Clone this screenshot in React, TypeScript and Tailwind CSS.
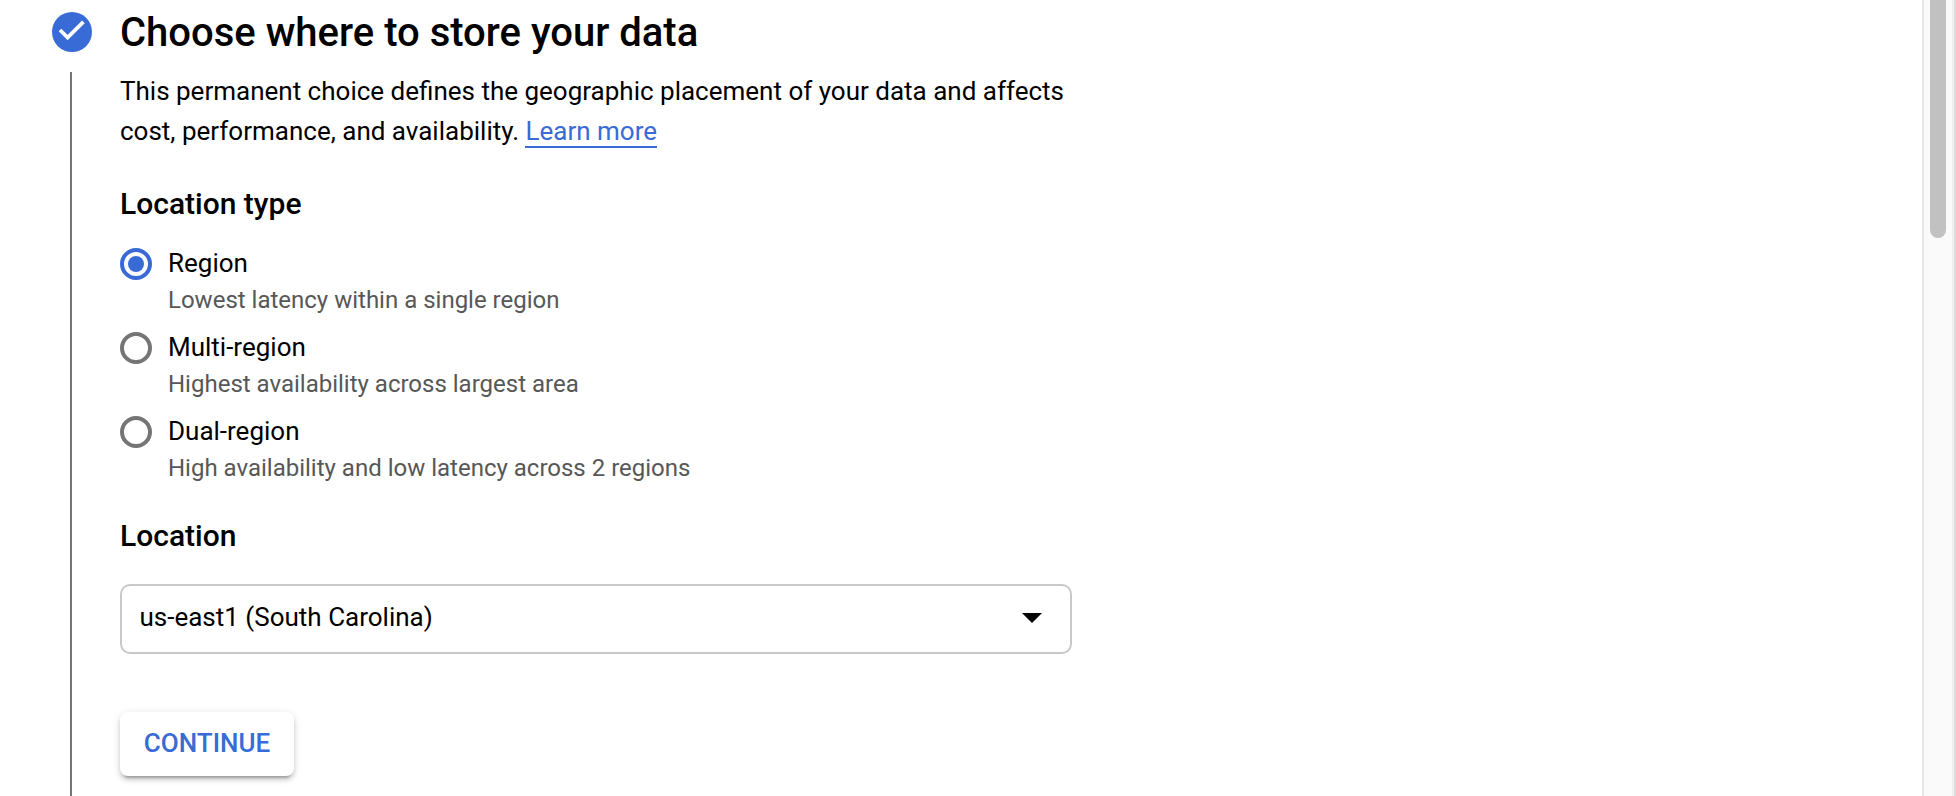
import React from "react";

type Option = { label: string; description: string };

const options: Option[] = [
  { label: "Region", description: "Lowest latency within a single region" },
  { label: "Multi-region", description: "Highest availability across largest area" },
  { label: "Dual-region", description: "High availability and low latency across 2 regions" },
];

export default function App() {
  const [selected, setSelected] = React.useState("Region");
  return (
    <div className="flex h-[796px] w-[1956px] overflow-hidden bg-white font-[Roboto,sans-serif] text-black">
      <div className="ml-[52px] flex w-[40px] shrink-0 flex-col">
        <svg className="mt-[12px] size-[40px] shrink-0" viewBox="0 0 40 40">
          <circle cx="20" cy="20" r="20" fill="#396bd6" />
          <path d="M8 18l7.6 7.6L31.4 9.8" fill="none" stroke="#fff" strokeWidth="3.8" />
        </svg>
        <div className="mt-[20px] ml-[18px] w-[2px] flex-1 bg-[#757575]" />
      </div>
      <main className="ml-[28px] w-[952px] shrink-0">
        <h1 className="mt-[9px] h-[48px] text-[40px] leading-[48px] font-medium whitespace-nowrap">Choose where to store your data</h1>
        <p className="mt-[14px] text-[26px] leading-[40px] whitespace-nowrap">
          This permanent choice defines the geographic placement of your data and affects
          <br />
          cost, performance, and availability.{" "}
          <a href="#" className="border-b-2 border-[#396bd6] text-[#396bd6]">Learn more</a>
        </p>
        <h2 className="mt-[33px] text-[30px] leading-[40px] font-medium">Location type</h2>
        <div className="mt-[20px] flex flex-col">
          {options.map((option) => (
            <button key={option.label} onClick={() => setSelected(option.label)} className="flex h-[84px] text-left">
              <svg className="mt-[4px] size-[32px] shrink-0" viewBox="0 0 32 32">
                <circle cx="16" cy="16" r="14" fill="none" strokeWidth="4" stroke={selected === option.label ? "#396bd6" : "#757575"} />
                {selected === option.label && <circle cx="16" cy="16" r="8" fill="#396bd6" />}
              </svg>
              <span className="ml-[16px] flex flex-col whitespace-nowrap">
                <span className="text-[26px] leading-[38px]">{option.label}</span>
                <span className="text-[24px] leading-[36px] text-[#575757]">{option.description}</span>
              </span>
            </button>
          ))}
        </div>
        <h2 className="mt-[20px] text-[30px] leading-[40px] font-medium">Location</h2>
        <button className="mt-[28px] flex h-[70px] w-[952px] items-center justify-between rounded-[10px] border-2 border-[#c9c9c9] pr-[28px] pb-[2px] pl-[17.5px] text-[26px]">
          <span className="pb-[2px]">us-east1 (South Carolina)</span>
          <svg className="h-[10px] w-[20px]" viewBox="0 0 20 10"><path d="M0 0h20L10 10z" /></svg>
        </button>
        <button className="mt-[58px] h-[64px] w-[174px] rounded-[8px] bg-white pb-[2px] text-[26px] font-medium text-[#396bd6] shadow-[0_6px_2px_-4px_rgba(0,0,0,0.2),0_4px_4px_0_rgba(0,0,0,0.14),0_2px_10px_0_rgba(0,0,0,0.12)]">CONTINUE</button>
      </main>
      <div className="ml-auto w-[34px] border-r-2 border-l-2 border-l-[#e7e7e7] border-r-[#dedede] bg-[#fafafa]">
        <div className="h-full border-r-2 border-[#ededed] pl-[6px]">
          <div className="h-[238px] w-[16px] rounded-b-[8px] bg-[#c1c1c1]" />
        </div>
      </div>
    </div>
  );
}
